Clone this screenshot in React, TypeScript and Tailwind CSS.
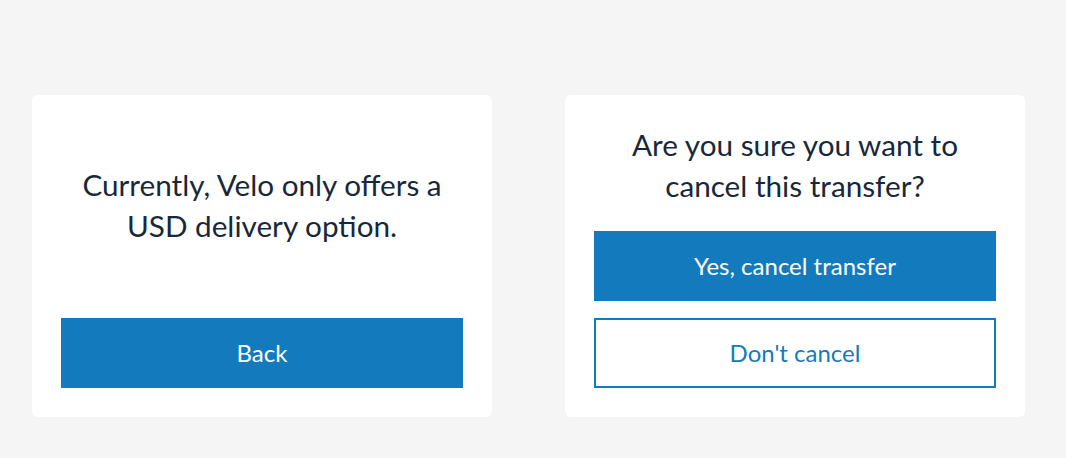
export default function App() {
  return (
    <div className="min-h-screen bg-[#f5f5f5] px-8 pt-[95px] font-['Lato','Open_Sans',sans-serif]">
      <div className="flex gap-[73px]">
        {/* Delivery notice */}
        <div className="flex h-[322px] w-[460px] flex-col rounded-md bg-white p-[29px]">
          <p className="mt-[40px] text-center text-[29.7px] leading-[41px] text-[#17283b]">
            Currently, Velo only offers a
            <br />
            USD delivery option.
          </p>
          <button className="mt-auto h-[70px] w-full bg-[#137bbd] text-[24px] text-white">
            Back
          </button>
        </div>

        {/* Cancel confirmation */}
        <div className="flex h-[322px] w-[460px] flex-col rounded-md bg-white p-[29px]">
          <p className="text-center text-[29.7px] leading-[41px] text-[#17283b]">
            Are you sure you want to
            <br />
            cancel this transfer?
          </p>
          <button className="mt-[25px] h-[70px] w-full bg-[#137bbd] text-[24px] text-white">
            Yes, cancel transfer
          </button>
          <button className="mt-[17px] h-[70px] w-full border-2 border-[#137bbd] bg-white text-[24px] text-[#137bbd]">
            Don't cancel
          </button>
        </div>
      </div>
    </div>
  );
}
